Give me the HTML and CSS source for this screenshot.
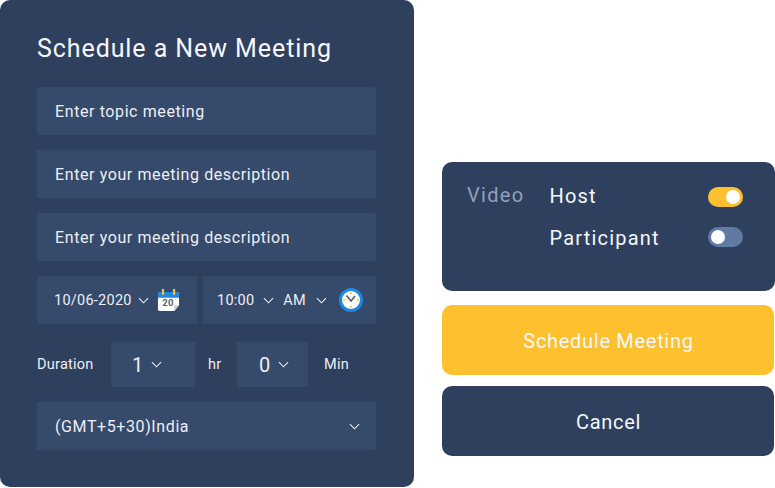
FILE: index.html
```html
<!DOCTYPE html>
<html lang="en">

<head>
    <meta charset="UTF-8">
    <meta name="viewport" content="width=device-width, initial-scale=1.0">
    <title>Schedule a New Meeting</title>
    <link rel="stylesheet" href="styles.css">
</head>

<body>
    <div class="page">
        <form class="meeting-form">
            <h1>Schedule a New Meeting</h1>

            <div class="field">Enter topic meeting</div>
            <div class="field">Enter your meeting description</div>
            <div class="field">Enter your meeting description</div>

            <div class="date-row">
                <div class="date-box">
                    <span>10/06-2020</span>
                    <svg class="chevron date-chevron" viewBox="0 0 12 7"><path d="M1 1l5 5 5-5"/></svg>
                    <svg class="calendar" viewBox="0 0 24 24">
                        <path d="M1 4h22v13l-5 6H3a2 2 0 0 1-2-2z" fill="#fff"/>
                        <path d="M18 23l5-6h-5z" fill="#c9ced6"/>
                        <path d="M1 9V5a2 2 0 0 1 2-2h18a2 2 0 0 1 2 2v4z" fill="#1e88e5"/>
                        <rect x="5" y="0" width="2.4" height="6" fill="#fbc02d"/>
                        <rect x="16.6" y="0" width="2.4" height="6" fill="#fbc02d"/>
                        <text x="11.5" y="18" class="calendar-day">20</text>
                    </svg>
                </div>
                <div class="time-box">
                    <span>10:00</span>
                    <svg class="chevron time-chevron" viewBox="0 0 12 7"><path d="M1 1l5 5 5-5"/></svg>
                    <span>AM</span>
                    <svg class="chevron ampm-chevron" viewBox="0 0 12 7"><path d="M1 1l5 5 5-5"/></svg>
                    <svg class="clock" viewBox="0 0 24 24">
                        <circle cx="12" cy="12" r="12" fill="#1e88e5"/>
                        <circle cx="12" cy="12" r="9" fill="#fdfdf8"/>
                        <circle cx="12" cy="5" r="1" fill="#fbc02d"/>
                        <circle cx="12" cy="19" r="1" fill="#fbc02d"/>
                        <circle cx="5" cy="12" r="1" fill="#fbc02d"/>
                        <circle cx="19" cy="12" r="1" fill="#fbc02d"/>
                        <path d="M7.5 7.5L12 13l4-5" fill="none" stroke="#5a5f66" stroke-width="1.6"/>
                    </svg>
                </div>
            </div>

            <div class="duration-row">
                <span class="duration-label">Duration</span>
                <div class="num-box hours">
                    <span>1</span>
                    <svg class="chevron" viewBox="0 0 12 7"><path d="M1 1l5 5 5-5"/></svg>
                </div>
                <span class="unit">hr</span>
                <div class="num-box minutes">
                    <span>0</span>
                    <svg class="chevron" viewBox="0 0 12 7"><path d="M1 1l5 5 5-5"/></svg>
                </div>
                <span class="unit unit-min">Min</span>
            </div>

            <div class="field timezone">
                <span>(GMT+5+30)India</span>
                <svg class="chevron" viewBox="0 0 12 7"><path d="M1 1l5 5 5-5"/></svg>
            </div>
        </form>

        <div class="side">
            <div class="video-card">
                <span class="video-label">Video</span>
                <div class="video-options">
                    <div class="video-option">
                        <span>Host</span>
                        <span class="toggle on"></span>
                    </div>
                    <div class="video-option">
                        <span>Participant</span>
                        <span class="toggle"></span>
                    </div>
                </div>
            </div>
            <button type="button" class="btn btn-schedule">Schedule Meeting</button>
            <button type="button" class="btn btn-cancel">Cancel</button>
        </div>
    </div>
</body>

</html>
```

FILE: styles.css
```css
html, body {
    margin: 0;
    padding: 0;
    background: white;
}

body {
    width: 775px;
    height: 488px;
    overflow: hidden;
    font-family: Roboto, 'Liberation Sans', sans-serif;
    color: #eceff4;
}

.page {
    display: flex;
    align-items: flex-start;
}

.meeting-form {
    box-sizing: border-box;
    width: 414px;
    height: 487px;
    padding: 0 38px 0 37px;
    background: #2f405e;
    border-radius: 10px;
}

h1 {
    margin: 0;
    height: 29px;
    padding: 34px 0 24px;
    line-height: 29px;
    font-size: 25px;
    font-weight: 400;
    letter-spacing: 0.92px;
    color: #f6f7fa;
}

.field {
    display: flex;
    align-items: center;
    justify-content: space-between;
    box-sizing: border-box;
    height: 48px;
    margin-bottom: 15px;
    padding: 0 18px;
    background: #364a6b;
    border-radius: 2px;
    font-size: 16px;
    letter-spacing: 0.6px;
}

.date-row {
    display: flex;
    gap: 6px;
    height: 48px;
}

.date-box, .time-box {
    display: flex;
    align-items: center;
    box-sizing: border-box;
    background: #364a6b;
    border-radius: 2px;
    font-size: 14.5px;
    letter-spacing: 0.25px;
}

.date-box {
    width: 160px;
    padding-left: 17px;
}

.time-box {
    width: 173px;
    padding-left: 14px;
}

.chevron {
    width: 11px;
    height: 7px;
    fill: none;
    stroke: #eef1f6;
    stroke-width: 1.2;
    flex-shrink: 0;
}

.date-chevron {
    margin-left: 6px;
}

.time-chevron {
    margin: 0 9px;
}

.ampm-chevron {
    margin-left: 10px;
}

.calendar {
    width: 23px;
    height: 23px;
    margin-left: 8px;
}

.calendar-day {
    font-family: Roboto, sans-serif;
    font-size: 10px;
    font-weight: 700;
    fill: #5a5f66;
    text-anchor: middle;
}

.clock {
    width: 24px;
    height: 24px;
    margin-left: 12px;
}

.duration-row {
    display: flex;
    align-items: center;
    height: 45px;
    margin: 18px 0 15px;
    font-size: 14.5px;
    letter-spacing: 0.25px;
}

.duration-label {
    width: 74px;
    padding-bottom: 1px;
}

.num-box {
    display: flex;
    align-items: center;
    box-sizing: border-box;
    height: 45px;
    background: #364a6b;
    border-radius: 2px;
    font-size: 20px;
}

.num-box .chevron {
    margin-left: 7px;
}

.hours {
    width: 84px;
    padding-left: 21px;
}

.minutes {
    width: 71px;
    padding-left: 22px;
}

.unit {
    width: 29px;
    margin-left: 13px;
    padding-bottom: 1px;
}

.unit-min {
    margin-left: 16px;
}

.timezone {
    margin-bottom: 0;
    padding-right: 16px;
}

.side {
    width: 333px;
    margin-left: 28px;
    padding-top: 162px;
}

.video-card {
    display: flex;
    box-sizing: border-box;
    height: 129px;
    padding: 21px 32px 0 25px;
    background: #2f405e;
    border-radius: 10px;
}

.video-label {
    width: 82.5px;
    height: 26px;
    line-height: 24px;
    font-size: 20px;
    letter-spacing: 1.3px;
    color: #8fa0bb;
}

.video-options {
    flex: 1;
    display: flex;
    flex-direction: column;
    gap: 16px;
}

.video-option {
    display: flex;
    align-items: center;
    justify-content: space-between;
    height: 26px;
    font-size: 20px;
    letter-spacing: 1.2px;
    color: #f6f7fa;
}

.toggle {
    position: relative;
    display: block;
    width: 35px;
    height: 20px;
    margin-bottom: 2px;
    background: #617aa2;
    border-radius: 10px;
}

.toggle::after {
    content: '';
    position: absolute;
    top: 3px;
    left: 3px;
    width: 14px;
    height: 14px;
    background: white;
    border-radius: 50%;
}

.toggle.on {
    margin-top: 2px;
    margin-bottom: 0;
    background: #fdc02f;
}

.toggle.on::after {
    left: 18px;
}

.btn {
    display: block;
    width: 332px;
    height: 70px;
    padding: 2px 0 0 1px;
    border: none;
    border-radius: 10px;
    font-family: inherit;
    font-size: 20px;
    letter-spacing: 0.7px;
    color: #f6f7fa;
}

.btn-schedule {
    margin-top: 14px;
    background: #fdc02f;
}

.btn-cancel {
    margin-top: 11px;
    background: #2f405e;
}
```
